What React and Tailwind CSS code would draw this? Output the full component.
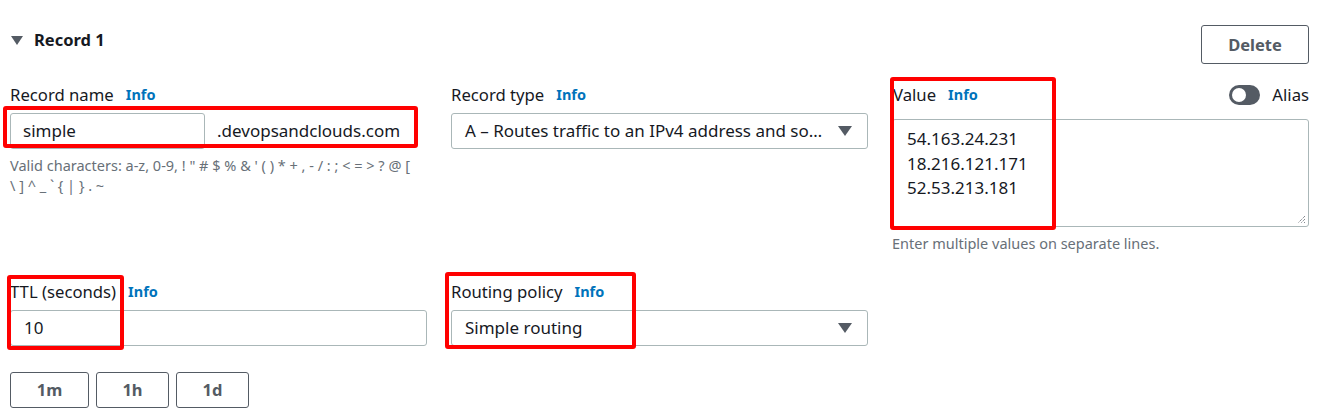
import React from "react";

const Info = () => (
  <span className="ml-[12px] text-[14.5px] font-bold text-[#0073bb]">Info</span>
);

const Caret = ({ className = "" }) => (
  <svg width="14" height="10" viewBox="0 0 14 10" className={className}>
    <path d="M0 0 H14 L7 10 Z" fill="#545b64" />
  </svg>
);

const RedBox = ({ className }) => (
  <div className={"pointer-events-none absolute rounded-[3px] border-[4px] border-[#ff0000] " + className} />
);

export default function App() {
  return (
    <div
      className="relative h-[413px] w-[1326px] overflow-hidden bg-white pl-[10px] pr-[17px] text-[#16191f]"
      style={{ fontFamily: '"Noto Sans", "Open Sans", sans-serif' }}
    >
      {/* Header */}
      <div className="flex items-start justify-between pt-[25px]">
        <div className="mt-[5px] flex items-center">
          <svg width="12" height="9" viewBox="0 0 12 9" className="ml-[1px]">
            <path d="M0 0 H12 L6 9 Z" fill="#545b64" />
          </svg>
          <span className="ml-[11px] text-[16.5px] font-bold leading-[20px]">Record 1</span>
        </div>
        <button className="h-[39px] w-[108px] rounded-[3px] border border-[#545b64] pt-[1px] text-[16.5px] font-bold text-[#545b64]">
          Delete
        </button>
      </div>

      {/* Row 1 */}
      <div className="mt-[21px] grid grid-cols-3 gap-x-[24px]">
        <div>
          <div className="flex h-[20px] items-center text-[16.7px]">
            Record name
            <Info />
          </div>
          <div className="mt-[8px] flex h-[36px] items-center">
            <div className="flex h-full w-[195px] items-center rounded-[3px] border border-[#aab7b8] pl-[12px] text-[17px]">
              simple
            </div>
            <span className="ml-[12px] text-[17px]">.devopsandclouds.com</span>
          </div>
          <div className="mt-[6px] text-[14.5px] leading-[20px] text-[#687078]">
            Valid characters: a-z, 0-9, ! " # $ % &amp; ' ( ) * + , - / : ; &lt; = &gt; ? @ [
            <br />
            \ ] ^ _ ` {"{"} | {"}"} . ~
          </div>
        </div>

        <div>
          <div className="flex h-[20px] items-center text-[16.7px]">
            Record type
            <Info />
          </div>
          <div className="mt-[8px] flex h-[36px] items-center justify-between rounded-[3px] border border-[#aab7b8] pl-[13px] pr-[15px] text-[17px]">
            <span className="whitespace-nowrap">A – Routes traffic to an IPv4 address and so…</span>
            <Caret />
          </div>
        </div>

        <div>
          <div className="flex h-[20px] items-center justify-between text-[16.7px]">
            <div className="flex items-center pl-[1px]">
              Value
              <Info />
            </div>
            <div className="flex items-center">
              <div className="flex h-[20px] w-[31px] items-center rounded-full bg-[#545b64] pl-[3px]">
                <div className="h-[14px] w-[14px] rounded-full bg-white" />
              </div>
              <span className="ml-[12px]">Alias</span>
            </div>
          </div>
          <div className="relative mt-[14px] h-[108px] rounded-[3px] border border-[#aab7b8] pl-[14px] pt-[7px] text-[17px] leading-[24.5px]">
            <div>54.163.24.231</div>
            <div>18.216.121.171</div>
            <div>52.53.213.181</div>
            <svg width="10" height="10" viewBox="0 0 10 10" className="absolute bottom-[2px] right-[2px]">
              <path d="M9 2 L2 9 M9 5 L5 9 M9 8 L8 9" stroke="#545b64" strokeWidth="1" strokeDasharray="1 1" />
            </svg>
          </div>
          <div className="mt-[6px] text-[14.5px] leading-[20px] text-[#687078]">
            Enter multiple values on separate lines.
          </div>
        </div>
      </div>

      {/* Row 2 */}
      <div className="mt-[29px] grid grid-cols-3 gap-x-[24px]">
        <div>
          <div className="flex h-[20px] items-center text-[16.7px]">
            TTL (seconds)
            <Info />
          </div>
          <div className="mt-[8px] flex h-[36px] items-center rounded-[3px] border border-[#aab7b8] pl-[13px] text-[17px]">
            10
          </div>
        </div>
        <div>
          <div className="flex h-[20px] items-center text-[16.7px]">
            Routing policy
            <Info />
          </div>
          <div className="mt-[8px] flex h-[36px] items-center justify-between rounded-[3px] border border-[#aab7b8] pl-[13px] pr-[15px] text-[17px]">
            <span>Simple routing</span>
            <Caret />
          </div>
        </div>
        <div />
      </div>

      {/* TTL buttons */}
      <div className="mt-[26px] flex gap-[7px]">
        {[
          ["1m", "w-[79px]"],
          ["1h", "w-[73px]"],
          ["1d", "w-[73px]"],
        ].map(([t, w]) => (
          <button
            key={t}
            className={"h-[36px] rounded-[3px] border border-[#545b64] pt-[1px] text-[16.5px] font-bold text-[#545b64] " + w}
          >
            {t}
          </button>
        ))}
      </div>

      {/* Annotation boxes */}
      <RedBox className="left-[3px] top-[106px] h-[42px] w-[415px]" />
      <RedBox className="left-[890px] top-[77px] h-[153px] w-[166px]" />
      <RedBox className="left-[7px] top-[275px] h-[75px] w-[117px]" />
      <RedBox className="left-[445px] top-[272px] h-[77px] w-[191px]" />
    </div>
  );
}
